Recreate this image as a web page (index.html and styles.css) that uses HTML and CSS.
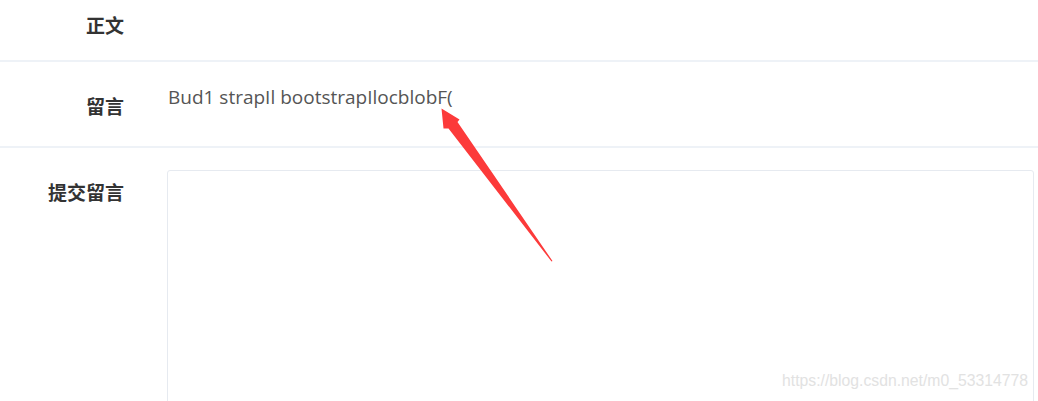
FILE: index.html
```html
<!DOCTYPE html>
<html lang="zh-CN">
<head>
  <meta charset="UTF-8" />
  <title>留言详情</title>
  <meta name="viewport" content="width=device-width, initial-scale=1" />
  <link rel="stylesheet" href="styles.css">
</head>
<body>

<div class="detail">
  <div class="row row-body">
    <div class="label">正文</div>
    <div class="value"></div>
  </div>
  <div class="row row-msg">
    <div class="label">留言</div>
    <div class="value">Bud1 strapIl bootstrapIlocblobF(</div>
  </div>
  <div class="row row-form">
    <div class="label">提交留言</div>
    <div class="value">
      <textarea class="msg-input"></textarea>
    </div>
  </div>

  <!-- annotation arrow -->
  <svg class="mark" width="1038" height="401" viewBox="0 0 1038 401">
    <polygon fill="#fc3a3a" points="441.5,108.5 459.5,119.5 457.5,122 552.5,261 551.5,261.5 448.5,128.5 443.5,128.5" />
  </svg>

  <div class="watermark">https://blog.csdn.net/m0_53314778</div>
</div>

</body>
</html>
```

FILE: styles.css
```css
* { box-sizing: border-box; }
body {
  margin: 0;
  background: #fff;
  font-family: 'Open Sans', 'Noto Sans CJK SC', sans-serif;
  color: #555;
}
.detail {
  position: relative;
  width: 1038px;
  height: 401px;
  overflow: hidden;
}
.row {
  display: flex;
  align-items: flex-start;
  gap: 44px;
  padding-right: 3px;
  border-bottom: 2px solid #eef2f7;
}
.label {
  width: 124px;
  flex-shrink: 0;
  text-align: right;
  font-family: 'Noto Sans CJK SC', sans-serif;
  font-weight: bold;
  font-size: 19px;
  line-height: 28px;
  color: #333;
  padding-top: 30px;
}
.value {
  flex: 1;
  font-size: 19px;
  line-height: 28px;
  padding-top: 21px;
}
.row-body { height: 62px; }
.row-body .label { padding-top: 11px; }
.row-msg { height: 86px; }
.row-form { border-bottom: none; }
.row-form .value { padding-top: 22px; }
.msg-input {
  display: block;
  width: 100%;
  height: 260px;
  border: 1px solid #e6eaf0;
  border-radius: 3px;
  resize: none;
  margin-left: -1px;
}
.mark {
  position: absolute;
  top: 0;
  left: 0;
  pointer-events: none;
}
.watermark {
  position: absolute;
  left: 782px;
  top: 372px;
  font-family: 'Liberation Sans', Arial, sans-serif;
  font-size: 15.75px;
  color: #e2e2e2;
}
```
